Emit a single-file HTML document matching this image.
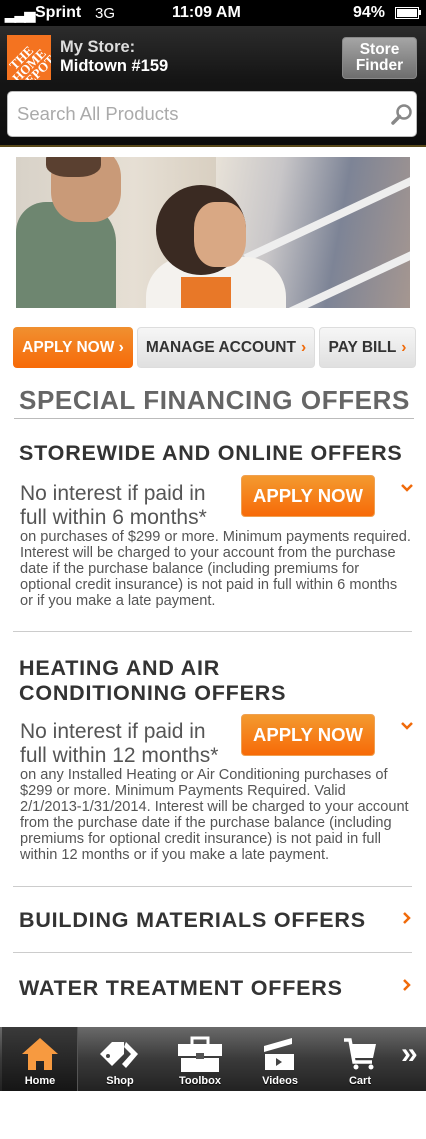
<!DOCTYPE html>
<html><head><meta charset="utf-8"><style>
*{margin:0;padding:0;box-sizing:border-box}
body{width:426px;height:1091px;overflow:hidden;background:#fff;font-family:"Liberation Sans",sans-serif;position:relative}
.a{position:absolute}
.sb{left:0;top:0;width:426px;height:26px;background:#000;color:#fff;font-size:16px;font-weight:bold}
.hd{left:0;top:26px;width:426px;height:120px;background:linear-gradient(#2c2c2c,#151515 45%,#0c0c0c)}
.btn{border-radius:4px;font-weight:bold;font-size:15.5px;display:flex;align-items:center;justify-content:center}
.h{color:#333;font-weight:bold;font-size:21.5px;left:19px;letter-spacing:0.8px}
.sub{color:#555;font-size:21px;line-height:24px;left:20px}
.sm{color:#555;font-size:14.6px;line-height:16px;left:20px;width:410px;white-space:nowrap}
.ap{left:241px;width:134px;height:42px;border-radius:4px;background:linear-gradient(#f39a30,#f76a08);color:#fff;font-weight:bold;font-size:18.5px;display:flex;align-items:center;justify-content:center;border:1px solid #f0a050}
.hr{left:13px;width:399px;height:1px;background:#ccc}
.tab{top:1027px;height:64px;color:#fff;font-size:11px;font-weight:bold;text-align:center;text-shadow:0 1px 1px #000}
</style></head><body>
<div class="a sb">
<div class="a" style="left:5px;top:6px;font-size:14px;letter-spacing:-1px">▂▃▅</div>
<div class="a" style="left:35px;top:4px">Sprint</div>
<div class="a" style="left:95px;top:5px;font-weight:normal;font-size:15px">3G</div>
<div class="a" style="left:172px;top:4px">11:09 AM</div>
<div class="a" style="left:353px;top:4px">94%</div>
<div class="a" style="left:395px;top:7px;width:24px;height:12px;border:1.5px solid #fff;padding:1px"><div style="background:#fff;width:100%;height:100%"></div></div>
<div class="a" style="left:419px;top:10px;width:2px;height:5px;background:#fff"></div>
</div>
<div class="a hd"></div>
<div class="a" style="left:7px;top:35px;width:44px;height:45px;background:#f47320;overflow:hidden">
<div class="a" style="left:-6px;top:14px;width:56px;color:#fff;font-family:'Liberation Serif',serif;font-weight:bold;font-size:13px;transform:rotate(-45deg);text-align:center;line-height:11px">THE<br>HOME<br>DEPOT</div></div>
<div class="a" style="left:60px;top:38px;color:#ddd;font-weight:bold;font-size:16.5px">My Store:</div>
<div class="a" style="left:60px;top:57px;color:#fff;font-weight:bold;font-size:16.5px">Midtown #159</div>
<div class="a btn" style="left:342px;top:37px;width:75px;height:42px;background:linear-gradient(#a5a5a5,#6e6e6e);color:#fff;font-size:15.5px;line-height:16px;text-align:center;border:1px solid #888">Store<br>Finder</div>
<div class="a" style="left:7px;top:91px;width:410px;height:46px;background:#fff;border-radius:5px;border:1px solid #bbb"></div>
<div class="a" style="left:17px;top:103px;color:#aaa;font-size:18.5px">Search All Products</div>
<svg class="a" style="left:390px;top:103px" width="24" height="24"><circle cx="14" cy="9" r="6.5" stroke="#888" stroke-width="2.5" fill="none"/><line x1="9.5" y1="13.5" x2="3" y2="20" stroke="#888" stroke-width="3.5" stroke-linecap="round"/></svg>
<div class="a" style="left:0;top:145px;width:426px;height:2px;background:#5a4a1a"></div>
<div class="a" style="left:16px;top:157px;width:394px;height:151px;overflow:hidden;background:linear-gradient(90deg,#d8d2c8,#e6dfd4 30%,#d9d0c2 50%,#b9b6b4 70%,#8b8f9a)">
<div class="a" style="left:200px;top:0;width:200px;height:151px;background:linear-gradient(100deg,#e8e2d8 0,#c8c6c8 30%,#7d8496 60%,#a89890)"></div>
<div class="a" style="left:220px;top:55px;width:200px;height:8px;background:#eee;transform:rotate(-25deg)"></div>
<div class="a" style="left:240px;top:120px;width:200px;height:8px;background:#eee;transform:rotate(-25deg)"></div>
<div class="a" style="left:0;top:45px;width:100px;height:110px;background:#6e8670;border-radius:30px 40px 0 0"></div>
<div class="a" style="left:35px;top:-10px;width:70px;height:75px;background:#c99a78;border-radius:40%"></div>
<div class="a" style="left:30px;top:-10px;width:55px;height:30px;background:#5a4030;border-radius:40%"></div>
<div class="a" style="left:130px;top:100px;width:140px;height:60px;background:#f4f2ee;border-radius:40px 40px 0 0"></div>
<div class="a" style="left:165px;top:120px;width:50px;height:40px;background:#e87828"></div>
<div class="a" style="left:140px;top:28px;width:90px;height:90px;background:#3a2a22;border-radius:50%"></div>
<div class="a" style="left:178px;top:45px;width:52px;height:65px;background:#d9a884;border-radius:40%"></div>
</div>
<div class="a btn" style="left:13px;top:327px;width:120px;height:41px;background:linear-gradient(#f09030,#f76a08);color:#fff">APPLY NOW ›</div>
<div class="a btn" style="left:137px;top:327px;width:178px;height:41px;background:linear-gradient(#f6f6f6,#e0e0e0);color:#333;border:1px solid #ddd">MANAGE ACCOUNT <span style="color:#f06a0a;margin-left:5px">›</span></div>
<div class="a btn" style="left:319px;top:327px;width:97px;height:41px;background:linear-gradient(#f6f6f6,#e0e0e0);color:#333;border:1px solid #ddd">PAY BILL <span style="color:#f06a0a;margin-left:5px">›</span></div>
<div class="a" style="left:19px;top:385px;color:#666;font-weight:bold;font-size:26px;letter-spacing:0.6px">SPECIAL FINANCING OFFERS</div>
<div class="a" style="left:14px;top:418px;width:400px;height:1px;background:#bbb"></div>
<div class="a h" style="top:441px">STOREWIDE AND ONLINE OFFERS</div>
<div class="a sub" style="top:482px">No interest if paid in<br>full within 6 months*</div>
<div class="a ap" style="top:475px">APPLY NOW</div>
<svg class="a" style="left:401px;top:484px" width="12" height="9"><path d="M1 1l5 5 5-5" stroke="#f06a0a" stroke-width="2.5" fill="none"/></svg>
<div class="a sm" style="top:529px">on purchases of $299 or more. Minimum payments required.<br>Interest will be charged to your account from the purchase<br>date if the purchase balance (including premiums for<br>optional credit insurance) is not paid in full within 6 months<br>or if you make a late payment.</div>
<div class="a hr" style="top:631px"></div>
<div class="a h" style="top:656px;line-height:25px">HEATING AND AIR<br>CONDITIONING OFFERS</div>
<div class="a sub" style="top:720px">No interest if paid in<br>full within 12 months*</div>
<div class="a ap" style="top:714px">APPLY NOW</div>
<svg class="a" style="left:401px;top:722px" width="12" height="9"><path d="M1 1l5 5 5-5" stroke="#f06a0a" stroke-width="2.5" fill="none"/></svg>
<div class="a sm" style="top:767px">on any Installed Heating or Air Conditioning purchases of<br>$299 or more. Minimum Payments Required. Valid<br>2/1/2013-1/31/2014. Interest will be charged to your account<br>from the purchase date if the purchase balance (including<br>premiums for optional credit insurance) is not paid in full<br>within 12 months or if you make a late payment.</div>
<div class="a hr" style="top:886px"></div>
<div class="a h" style="top:908px">BUILDING MATERIALS OFFERS</div>
<svg class="a" style="left:403px;top:912px" width="9" height="12"><path d="M1 1l5 5-5 5" stroke="#f06a0a" stroke-width="2.5" fill="none"/></svg>
<div class="a hr" style="top:952px"></div>
<div class="a h" style="top:976px">WATER TREATMENT OFFERS</div>
<svg class="a" style="left:403px;top:979px" width="9" height="12"><path d="M1 1l5 5-5 5" stroke="#f06a0a" stroke-width="2.5" fill="none"/></svg>
<div class="a" style="left:0;top:1027px;width:426px;height:64px;background:linear-gradient(#6a6a6a,#3a3a3a 50%,#222)"></div>
<div class="a" style="left:2px;top:1027px;width:76px;height:64px;background:linear-gradient(#3a3a3a,#151515);border-right:1px solid #555"></div>
<svg class="a" style="left:20px;top:1036px" width="40" height="36"><path d="M20 2L2 18h6v16h8v-9h8v9h8V18h6z" fill="#f79a40"/></svg>
<div class="a tab" style="left:0;width:80px;top:1075px">Home</div>
<svg class="a" style="left:96px;top:1038px" width="48" height="34"><path d="M4 16L16 4h12v12L16 28z" fill="#fff"/><circle cx="12" cy="18" r="2" fill="#444"/><path d="M30 4l12 12-12 14-4-4 9-10-7-7z" fill="#fff"/></svg>
<div class="a tab" style="left:80px;width:80px;top:1075px">Shop</div>
<svg class="a" style="left:177px;top:1036px" width="46" height="38"><path d="M15 8V2h16v6" stroke="#fff" stroke-width="3" fill="none"/><rect x="1" y="8" width="44" height="12" fill="#fff"/><rect x="4" y="22" width="38" height="14" fill="#fff"/><rect x="19" y="17" width="8" height="6" fill="#555"/></svg>
<div class="a tab" style="left:160px;width:80px;top:1075px">Toolbox</div>
<svg class="a" style="left:262px;top:1036px" width="34" height="36"><path d="M2 10L30 2v6L2 16z" fill="#fff"/><rect x="3" y="18" width="29" height="16" fill="#fff"/><path d="M14 22l6 4-6 4z" fill="#444"/></svg>
<div class="a tab" style="left:240px;width:80px;top:1075px">Videos</div>
<svg class="a" style="left:342px;top:1036px" width="36" height="36"><path d="M2 4h6l4 22h18" stroke="#fff" stroke-width="3.5" fill="none"/><path d="M10 8h24l-3 14H12z" fill="#fff"/><circle cx="14" cy="31" r="2.5" fill="#fff"/><circle cx="29" cy="31" r="2.5" fill="#fff"/></svg>
<div class="a tab" style="left:320px;width:80px;top:1075px">Cart</div>
<div class="a" style="left:401px;top:1037px;color:#fff;font-size:30px;font-weight:bold">»</div>
</body></html>
